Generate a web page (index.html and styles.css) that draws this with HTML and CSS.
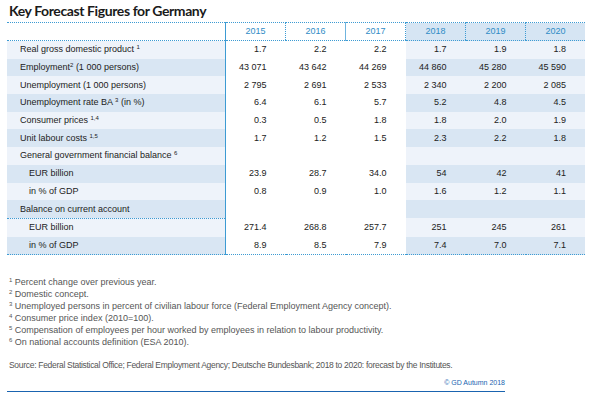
FILE: index.html
```html
<!DOCTYPE html>
<html>
<head>
<meta charset="utf-8">
<link rel="stylesheet" href="styles.css">
</head>
<body>
<div class="page">
  <h1 class="title">Key Forecast Figures for Germany</h1>
  <table class="kf">
    <thead>
      <tr>
        <th class="lab"></th>
        <th class="y">2015</th>
        <th class="y">2016</th>
        <th class="y solid">2017</th>
        <th class="y f">2018</th>
        <th class="y f">2019</th>
        <th class="y f">2020</th>
      </tr>
    </thead>
    <tbody>
      <tr class="l"><td class="lab">Real gross domestic product <sup>1</sup></td><td>1.7</td><td>2.2</td><td>2.2</td><td class="f">1.7</td><td class="f">1.9</td><td class="f">1.8</td></tr>
      <tr class="b"><td class="lab">Employment<sup>2</sup> (1 000 persons)</td><td>43 071</td><td>43 642</td><td>44 269</td><td class="f">44 860</td><td class="f">45 280</td><td class="f">45 590</td></tr>
      <tr class="l"><td class="lab">Unemployment (1 000 persons)</td><td>2 795</td><td>2 691</td><td>2 533</td><td class="f">2 340</td><td class="f">2 200</td><td class="f">2 085</td></tr>
      <tr class="b"><td class="lab">Unemployment rate BA <sup>3</sup> (in %)</td><td>6.4</td><td>6.1</td><td>5.7</td><td class="f">5.2</td><td class="f">4.8</td><td class="f">4.5</td></tr>
      <tr class="l"><td class="lab">Consumer prices <sup>1,4</sup></td><td>0.3</td><td>0.5</td><td>1.8</td><td class="f">1.8</td><td class="f">2.0</td><td class="f">1.9</td></tr>
      <tr class="b"><td class="lab">Unit labour costs <sup>1,5</sup></td><td>1.7</td><td>1.2</td><td>1.5</td><td class="f">2.3</td><td class="f">2.2</td><td class="f">1.8</td></tr>
      <tr class="l"><td class="lab">General government financial balance <sup>6</sup></td><td></td><td></td><td></td><td class="f"></td><td class="f"></td><td class="f"></td></tr>
      <tr class="b"><td class="lab sub">EUR billion</td><td>23.9</td><td>28.7</td><td>34.0</td><td class="f">54</td><td class="f">42</td><td class="f">41</td></tr>
      <tr class="l"><td class="lab sub">in % of GDP</td><td>0.8</td><td>0.9</td><td>1.0</td><td class="f">1.6</td><td class="f">1.2</td><td class="f">1.1</td></tr>
      <tr class="b"><td class="lab sep">Balance on current account</td><td></td><td></td><td></td><td class="f"></td><td class="f"></td><td class="f"></td></tr>
      <tr class="l"><td class="lab sub">EUR billion</td><td>271.4</td><td>268.8</td><td>257.7</td><td class="f">251</td><td class="f">245</td><td class="f">261</td></tr>
      <tr class="b"><td class="lab sub">in % of GDP</td><td>8.9</td><td>8.5</td><td>7.9</td><td class="f">7.4</td><td class="f">7.0</td><td class="f">7.1</td></tr>
    </tbody>
  </table>

  <div class="notes">
    <p><sup>1</sup> Percent change over previous year.</p>
    <p><sup>2</sup> Domestic concept.</p>
    <p><sup>3</sup> Unemployed persons in percent of civilian labour force (Federal Employment Agency concept).</p>
    <p><sup>4</sup> Consumer price index (2010=100).</p>
    <p><sup>5</sup> Compensation of employees per hour worked by employees in relation to labour productivity.</p>
    <p><sup>6</sup> On national accounts definition (ESA 2010).</p>
  </div>
  <div class="bottom">
    <p class="source">Source: Federal Statistical Office; Federal Employment Agency; Deutsche Bundesbank; 2018 to 2020: forecast by the Institutes.</p>
    <p class="copy">© GD Autumn 2018</p>
  </div>
</div>
</body>
</html>
```

FILE: styles.css
```css
html, body {
  margin: 0;
  padding: 0;
  background: #ffffff;
}

.page {
  padding: 0 0 0 7px;
  font-family: "Liberation Sans", Arial, sans-serif;
  color: #222222;
}

.title {
  margin: 0;
  height: 22px;
  line-height: 22px;
  padding-left: 2px;
  font-family: Lato, "Liberation Sans", sans-serif;
  font-weight: 700;
  font-size: 14px;
  color: #1a1a1a;
  letter-spacing: -0.4px;
}

.kf {
  border-collapse: collapse;
  table-layout: fixed;
  width: 573px;
  font-size: 9px;
}

.kf th, .kf td {
  padding: 0;
  height: 17.7px;
  line-height: 17px;
  white-space: nowrap;
}

.kf thead th {
  height: 17px;
  border-top: 1px dotted #3d9bd3;
  border-bottom: 1px dotted #3d9bd3;
  font-weight: normal;
  color: #2f8cc6;
  text-align: center;
}

.kf th.lab { width: 218px; }
.kf th.y { width: 59px; border-left: 1px dotted #3d9bd3; }
.kf th.y.solid { border-left: 1px solid #6fb4de; }
.kf th.f { background: #d6e5f3; }

.kf td {
  text-align: right;
  padding-right: 19px;
}

.kf td.lab {
  text-align: left;
  padding-left: 13px;
  padding-right: 0;
  border-right: 1px solid #3d9bd3;
}
.kf th.lab { border-right: 1px solid #3d9bd3; }

.kf td.sub { padding-left: 22px; }
.kf td.sep { border-bottom: 1px dotted #3d9bd3; }

.kf tr.l td.lab, .kf tr.l td.f { background: #eef3fa; }
.kf tr.b td.lab, .kf tr.b td.f { background: #d9e6f3; }

.kf tbody tr:last-child td { border-bottom: 1px dotted #3d9bd3; }

.kf sup, .notes sup {
  font-size: 6px;
  line-height: 0;
  vertical-align: 3px;
}

.notes {
  margin-top: 21px;
  padding-left: 2px;
  font-size: 9px;
  color: #555555;
}

.notes p {
  margin: 0;
  height: 12px;
  line-height: 12px;
}

.bottom {
  width: 498px;
  border-bottom: 1px solid #1a64b0;
}

.source {
  margin: 11px 0 0;
  padding-left: 2px;
  font-size: 8.5px;
  letter-spacing: -0.3px;
  line-height: 12px;
  white-space: nowrap;
  color: #555555;
}

.copy {
  margin: 7px 0 0;
  padding-bottom: 3px;
  text-align: right;
  font-size: 7px;
  line-height: 10px;
  color: #1a64b0;
}
```
